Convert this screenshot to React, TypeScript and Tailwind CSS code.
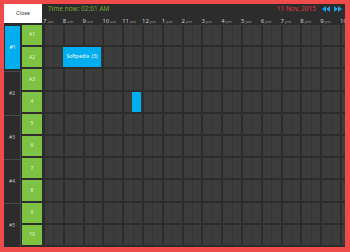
import React from "react";

const hours = [
  ["7", "am"], ["8", "am"], ["9", "am"], ["10", "am"], ["11", "am"], ["12", "pm"],
  ["1", "pm"], ["2", "pm"], ["3", "pm"], ["4", "pm"], ["5", "pm"], ["6", "pm"],
  ["7", "pm"], ["8", "pm"], ["9", "pm"], ["10", ""],
];

const groups = [
  { label: "#1", rows: ["A1", "A2"], active: true },
  { label: "#2", rows: ["A3", "4"] },
  { label: "#3", rows: ["5", "6"] },
  { label: "#4", rows: ["7", "8"] },
  { label: "#5", rows: ["9", "10"] },
];

const Rewind = ({ flip }: { flip?: boolean }) => (
  <svg width="8" height="6" viewBox="0 0 8 6" className={flip ? "rotate-180" : ""}>
    <polygon points="0,3 4,0 4,6" fill="#1ba1e2" />
    <polygon points="4,3 8,0 8,6" fill="#1ba1e2" />
  </svg>
);

const GridRow = () => (
  <div className="flex-1 flex pb-[2px] bg-[#2c2c2c]">
    {hours.map((h, i) => (
      <div key={i} className="w-[19.8px] shrink-0 flex border-l-2 border-[#2c2c2c]">
        <div className="flex-1 bg-[#3c3c3c] border-r border-[#353535]" />
        <div className="flex-1 bg-[#3c3c3c]" />
      </div>
    ))}
  </div>
);

export default function App() {
  return (
    <div
      className="w-[350px] h-[252px] bg-[#f04b4b] pt-[4px] pl-[4px] pr-[5px] pb-[5px]"
      style={{ fontFamily: '"Noto Sans", "Open Sans", sans-serif' }}
    >
      <div className="w-full h-full bg-[#2c2c2c] overflow-hidden flex flex-col">
        {/* header */}
        <div className="h-[21px] flex shrink-0">
          <button className="w-[38px] h-[19px] bg-white text-[5.5px] text-[#333] flex items-center justify-center">
            Close
          </button>
          <div className="flex-1 flex flex-col overflow-hidden">
            <div className="h-[10px] flex items-center pl-[6px] pr-[3px]">
              <span className="text-[6.5px] leading-none text-[#76a832]">Time now: 02:01 AM</span>
              <span className="ml-auto text-[6.5px] leading-none text-[#e8383d]">11 Nov, 2015</span>
              <span className="ml-[6px] flex gap-[4px]">
                <Rewind />
                <Rewind flip />
              </span>
            </div>
            <div className="flex-1 flex pl-[1px]">
              {hours.map(([n, s], i) => (
                <div key={i} className="w-[19.8px] shrink-0 flex items-end pb-[1px] text-[#c8c8c8]">
                  <span className="text-[6px] leading-none">{n}</span>
                  {s && <span className="text-[4px] leading-none ml-[1px] text-[#999]">{s}</span>}
                </div>
              ))}
            </div>
          </div>
        </div>

        {/* body */}
        <div className="flex-1 flex">
          <div className="w-[17px] shrink-0 flex flex-col">
            {groups.map((g) =>
              g.active ? (
                <div key={g.label} className="flex-1 p-[1px] pb-[2px]">
                  <div className="h-full bg-[#00aeef] flex items-center justify-center text-[5px] text-white">
                    {g.label}
                  </div>
                </div>
              ) : (
                <div
                  key={g.label}
                  className="flex-1 border-t border-r border-[#474747] flex items-center pl-[5px] text-[5px] text-[#bbb]"
                >
                  {g.label}
                </div>
              )
            )}
          </div>
          <div className="w-[22px] shrink-0 flex flex-col">
            {groups.flatMap((g) => g.rows).map((r) => (
              <div key={r} className="flex-1 px-[1px] pb-[2px]">
                <div className="h-full bg-[#7dc242] flex items-center justify-center text-[5px] text-[#eaf5dc]">
                  {r}
                </div>
              </div>
            ))}
          </div>
          <div className="flex-1 flex flex-col relative overflow-hidden">
            {Array.from({ length: 10 }).map((_, i) => (
              <GridRow key={i} />
            ))}
            <div className="absolute left-[20px] top-[22px] w-[38px] h-[20px] bg-[#00aeef] flex items-center justify-center text-[5px] text-white">
              Softpedia&nbsp;&nbsp;(3)
            </div>
            <div className="absolute left-[89px] top-[67px] w-[9px] h-[20px] bg-[#00aeef]" />
          </div>
        </div>
      </div>
    </div>
  );
}
